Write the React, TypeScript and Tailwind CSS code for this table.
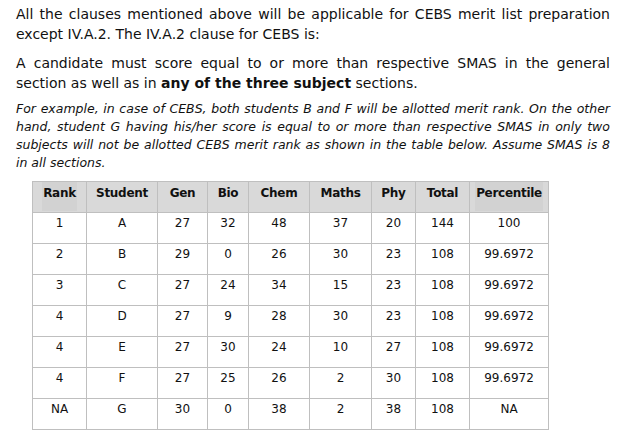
import React from 'react';

type Row = [string, string, number, number, number, number, number, number, string];

const rows: Row[] = [
  ['1', 'A', 27, 32, 48, 37, 20, 144, '100'],
  ['2', 'B', 29, 0, 26, 30, 23, 108, '99.6972'],
  ['3', 'C', 27, 24, 34, 15, 23, 108, '99.6972'],
  ['4', 'D', 27, 9, 28, 30, 23, 108, '99.6972'],
  ['4', 'E', 27, 30, 24, 10, 27, 108, '99.6972'],
  ['4', 'F', 27, 25, 26, 2, 30, 108, '99.6972'],
  ['NA', 'G', 30, 0, 38, 2, 38, 108, 'NA'],
];

const headers = ['Rank', 'Student', 'Gen', 'Bio', 'Chem', 'Maths', 'Phy', 'Total', 'Percentile'];
const widths = ['w-[54px]', 'w-[71px]', 'w-[50px]', 'w-[41px]', 'w-[61px]', 'w-[62px]', 'w-[44px]', 'w-[54px]', 'w-[79px]'];

// one line of justified text, stretched to the full column
const Line = ({ children, last }: { children: React.ReactNode; last?: boolean }) => (
  <span className={`block whitespace-nowrap ${last ? 'text-left' : 'text-justify [text-align-last:justify]'}`}>
    {children}
  </span>
);

export default function App() {
  return (
    <div className="w-[625px] h-[445px] bg-white px-4 pt-1 text-[#111] font-['DejaVu_Sans',sans-serif]">
      <p className="w-[594px] text-[14px] leading-[20px]">
        <Line>All the clauses mentioned above will be applicable for CEBS merit list preparation</Line>
        <Line last>except IV.A.2. The IV.A.2 clause for CEBS is:</Line>
      </p>

      <p className="mt-[9px] w-[594px] text-[14px] leading-[20px]">
        <Line>A candidate must score equal to or more than respective SMAS in the general</Line>
        <Line last>
          section as well as in <b>any of the three subject</b> sections.
        </Line>
      </p>

      <p className="mt-[7px] w-[594px] text-[12.5px] italic leading-[18px]">
        <Line>For example, in case of CEBS, both students B and F will be allotted merit rank. On the other</Line>
        <Line>hand, student G having his/her score is equal to or more than respective SMAS in only two</Line>
        <Line>subjects will not be allotted CEBS merit rank as shown in the table below. Assume SMAS is 8</Line>
        <Line last>in all sections.</Line>
      </p>

      <table className="mt-[9px] ml-4 table-fixed border-collapse text-[12px] leading-[16px]">
        <thead>
          <tr className="h-[31px] bg-[#d9d9d9]">
            {headers.map((h, i) => (
              <th
                key={h}
                className={`${widths[i]} border border-[#bfbfbf] p-0 align-top font-bold tracking-[-0.3px]`}
              >
                {h === 'Rank' || h === 'Percentile' ? (
                  <span className="inline-block h-[29px] bg-[#d2d2d2] px-[1px] pt-[3px]">{h}</span>
                ) : (
                  <span className="inline-block pt-[3px]">{h}</span>
                )}
              </th>
            ))}
          </tr>
        </thead>
        <tbody>
          {rows.map((r, idx) => (
            <tr key={idx} className="h-[31px]">
              {r.map((c, i) => (
                <td key={i} className="border border-[#bfbfbf] p-0 pt-[2px] text-center align-top">
                  {c}
                </td>
              ))}
            </tr>
          ))}
        </tbody>
      </table>
    </div>
  );
}
